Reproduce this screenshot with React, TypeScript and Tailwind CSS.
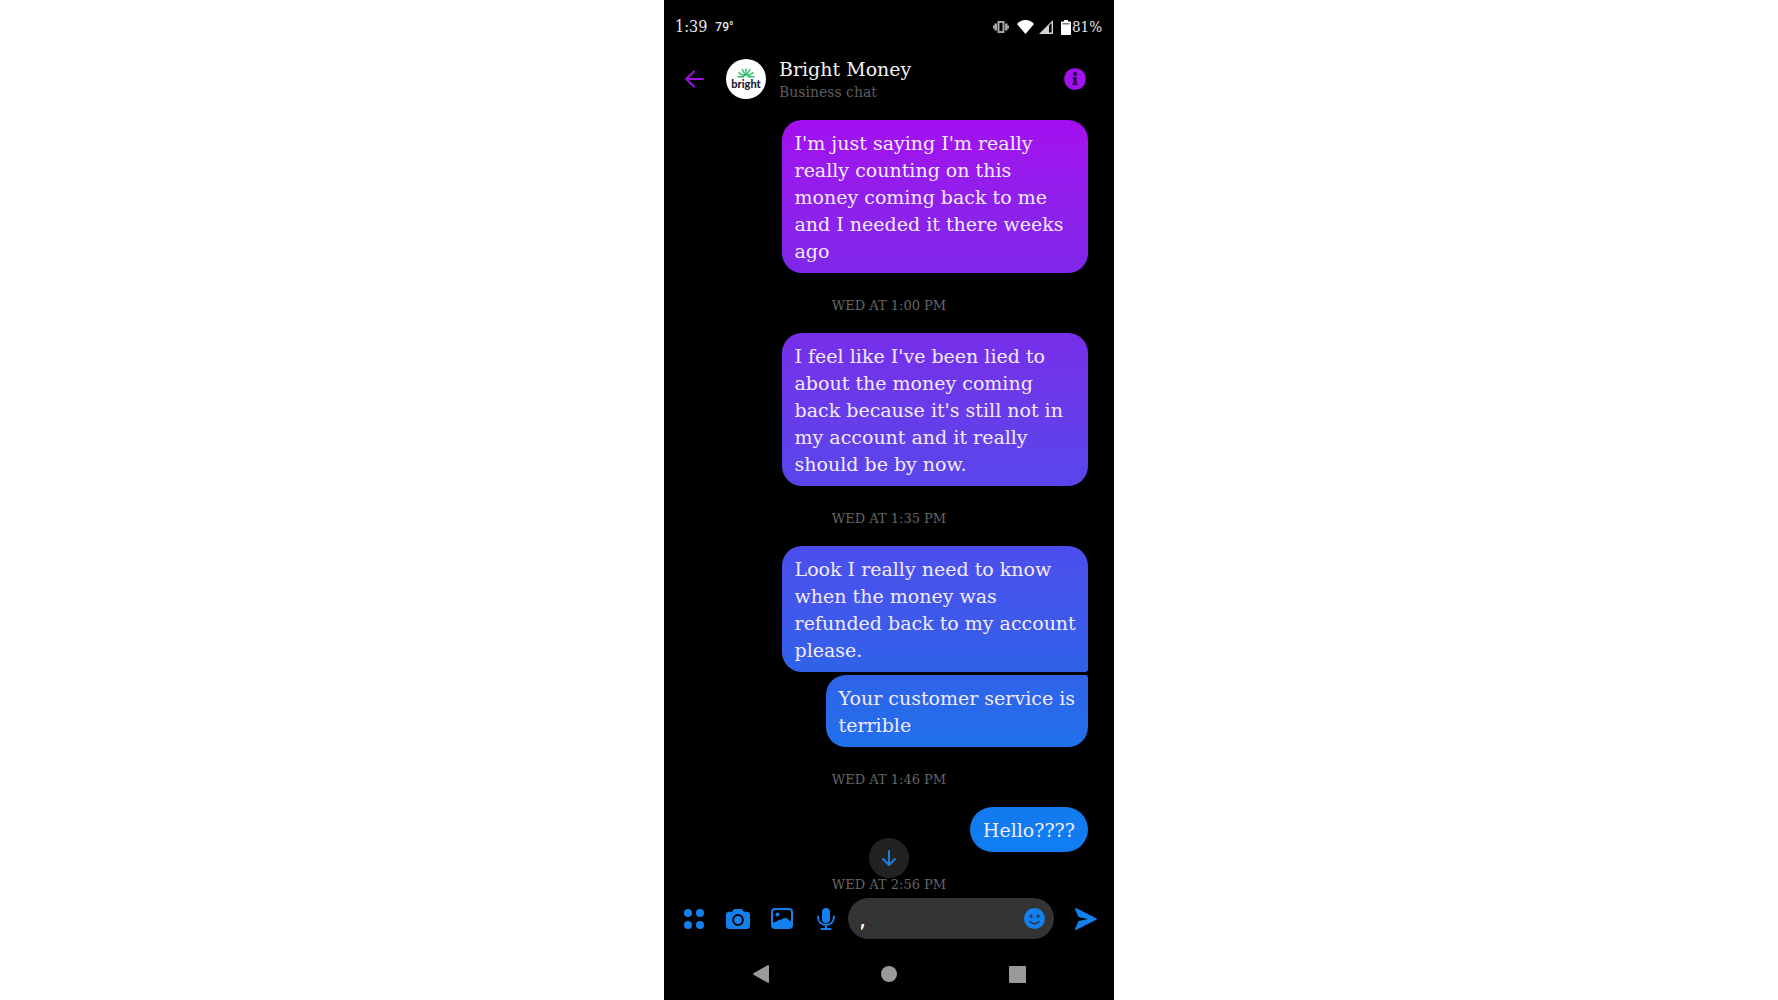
import React, { useState } from 'react';
import { clsx } from 'clsx';

// --- Data ---
type Message = {
  id: number;
  text: string;
  className: string;
  time?: string;
};

const MESSAGES: Message[] = [
  {
    id: 1,
    text: "I'm just saying I'm really\nreally counting on this\nmoney coming back to me\nand I needed it there weeks\nago",
    className: 'w-[77%] rounded-[20px] from-[#a30eef] to-[#7f27e8]',
    time: 'WED AT 1:00 PM',
  },
  {
    id: 2,
    text: "I feel like I've been lied to\nabout the money coming\nback because it's still not in\nmy account and it really\nshould be by now.",
    className: 'w-[77%] rounded-[20px] from-[#772ee9] to-[#5746ea]',
    time: 'WED AT 1:35 PM',
  },
  {
    id: 3,
    text: 'Look I really need to know\nwhen the money was\nrefunded back to my account\nplease.',
    className: 'mb-[3px] w-[77%] rounded-[20px] rounded-br-[3px] from-[#4c4dec] to-[#2f62e9]',
  },
  {
    id: 4,
    text: 'Your customer service is\nterrible',
    className: 'rounded-[20px] rounded-tr-[3px] from-[#2f63e9] to-[#1f70ec]',
    time: 'WED AT 1:46 PM',
  },
  {
    id: 5,
    text: 'Hello????',
    className: 'rounded-[23px] from-[#127bee] to-[#0f7df3]',
    time: 'WED AT 2:56 PM',
  },
];

// --- Status bar ---
function StatusBar() {
  return (
    <div className="flex h-[54px] shrink-0 items-center justify-between pr-3 pl-[11px] font-['DejaVu_Serif_Condensed','DejaVu_Serif',serif] text-[#e8e8e8]">
      <div className="flex items-center gap-2">
        <span className="text-base">1:39</span>
        <span className="font-['Roboto'] text-xs font-medium">79°</span>
      </div>
      <div className="flex items-center">
        <svg width="16" height="12" viewBox="0 0 16 12" className="mr-2 fill-[#a5a5a5]">
          <path d="M0 4.500h1.500V2.500H4v7H1.500v-2H0zM16 4.500h-1.500V2.500H12v7h2.500v-2H16z" />
          <path fillRule="evenodd" d="M4.500 0h7v12h-7zM6.500 2v8h3V2z" />
        </svg>
        <svg width="17" height="14" viewBox="0 0 17 14" className="mr-[5px] fill-white">
          <path d="M8.500 14 0 4C4.500-1.300 12.500-1.300 17 4z" />
        </svg>
        <svg width="14" height="14" viewBox="0 0 14 14" className="mr-2">
          <path d="M14 0v14H0z" fill="#d5d5d5" />
          <path d="M10 5.500 12.600 3v9.500H10z" fill="#000" />
        </svg>
        <svg width="10" height="15" viewBox="0 0 10 15" className="mr-px">
          <path d="M3 0h4v1.500h2c.600 0 1 .400 1 1V14c0 .600-.400 1-1 1H1c-.600 0-1-.400-1-1V2.500c0-.600.400-1 1-1h2z" fill="#fff" />
          <path d="M1.500 3h7v1.500h-7z" fill="#777" />
        </svg>
        <span className="text-[15px]">81%</span>
      </div>
    </div>
  );
}

function BrightLogo() {
  return (
    <div className="flex size-10 shrink-0 flex-col items-center rounded-full bg-white pt-[9px]">
      <svg width="18" height="10" viewBox="0 0 18 10" className="shrink-0" fill="none" stroke="#2fbd6b" strokeWidth="1.500" strokeLinecap="round">
        <path d="M1 8.800h5M12 8.800h5M2 4.800l5 3M16 4.800l-5 3M5.300 1.500l2.500 5M12.700 1.500l-2.500 5M9 .900v5.500" />
        <path d="M6 9c.500-3 5.500-3 6 0" />
      </svg>
      <span className="font-['Lato'] text-[11px] leading-3 font-black text-[#1d1b33]">bright</span>
    </div>
  );
}

// --- Header ---
function ChatHeader() {
  return (
    <header className="flex h-[50px] shrink-0 items-center pr-7 pl-[21px]">
      <button aria-label="Back" className="mr-[21px] shrink-0">
        <svg width="20" height="18" viewBox="0 0 20 18" fill="none" stroke="#9c14e0" strokeWidth="2" strokeLinecap="round" strokeLinejoin="round">
          <path d="M18 9H1.500M9 1.500 1.200 9 9 16.500" />
        </svg>
      </button>
      <BrightLogo />
      <div className="ml-[13px] flex-1 pt-0.5">
        <h1 className="text-[19px] leading-6 text-[#f2f2f2]">Bright Money</h1>
        <p className="text-sm leading-[22px] text-[#5c5c5c]">Business chat</p>
      </div>
      <button aria-label="Conversation info">
        <svg width="22" height="22" viewBox="0 0 22 22">
          <circle cx="11" cy="11" r="10.800" fill="#a012f0" />
          <circle cx="11" cy="6" r="2" fill="#250040" />
          <path d="M8.500 9.300h4v6.200h1V17h-5v-1.500h1v-4.700h-1z" fill="#250040" />
        </svg>
      </button>
    </header>
  );
}

function MessageItem({ message }: { message: Message }) {
  return (
    <li className="flex flex-col items-end">
      <p
        className={clsx(
          'bg-linear-to-b px-[13px] pt-2.5 pb-2 text-[19px] leading-[27px] whitespace-pre text-[#f4eaff]',
          message.className
        )}
      >
        {message.text}
      </p>
      {message.time && (
        <time className="flex h-[60px] w-full items-center justify-center pt-1.5 text-[13px] text-[#666]">{message.time}</time>
      )}
    </li>
  );
}

// --- Composer ---
function Composer() {
  const [draft, setDraft] = useState(',');

  return (
    <form className="flex h-[59px] shrink-0 items-center px-2 text-[#1380f0]" onSubmit={e => e.preventDefault()}>
      <button type="button" aria-label="More" className="flex w-11 shrink-0 justify-center">
        <svg width="20" height="20" viewBox="0 0 20 20" fill="currentColor">
          <circle cx="4" cy="4" r="4" />
          <circle cx="16" cy="4" r="4" />
          <circle cx="4" cy="16" r="4" />
          <circle cx="16" cy="16" r="4" />
        </svg>
      </button>
      <button type="button" aria-label="Camera" className="flex w-11 shrink-0 justify-center">
        <svg width="24" height="20" viewBox="0 0 24 20">
          <path d="M7 1.500C7.600.500 8.300 0 9.300 0h5.400c1 0 1.700.500 2.300 1.500l.8 1.300H21c1.700 0 3 1.300 3 3V17c0 1.700-1.300 3-3 3H3c-1.700 0-3-1.300-3-3V5.800c0-1.700 1.300-3 3-3h3.200z" fill="currentColor" />
          <circle cx="12" cy="11" r="4.900" fill="none" stroke="#000" strokeWidth="2" />
        </svg>
      </button>
      <button type="button" aria-label="Gallery" className="flex w-11 shrink-0 justify-center">
        <svg width="22" height="21" viewBox="0 0 22 21">
          <rect x="1" y="1" width="20" height="19" rx="3" fill="none" stroke="currentColor" strokeWidth="2" />
          <circle cx="6.500" cy="6.500" r="2" fill="currentColor" />
          <path d="M1 14.500c2.500 0 4-.700 5.500-1.800C8 11.500 9 12 10.300 11.500c1.500-.500 2.500-1.500 4.200-1.500 2.500 0 3.500 3 6.500 4v3c0 2-1 3-3 3H4c-2 0-3-1-3-3z" fill="currentColor" />
        </svg>
      </button>
      <button type="button" aria-label="Voice message" className="flex w-11 shrink-0 justify-center">
        <svg width="18" height="22" viewBox="0 0 18 22">
          <rect x="5" y="0" width="8" height="15" rx="4" fill="currentColor" />
          <path d="M1 8.500c0 5.500 3.500 8.500 8 8.500s8-3 8-8.500M9 17v4M4.500 21h9" fill="none" stroke="currentColor" strokeWidth="2" strokeLinecap="round" />
        </svg>
      </button>
      <div className="mr-3 flex h-[41px] min-w-0 flex-1 items-center rounded-full bg-[#343434] pr-[9px] pl-[13px]">
        <input
          aria-label="Message"
          value={draft}
          onChange={e => setDraft(e.target.value)}
          className="w-full min-w-0 bg-transparent font-['Roboto'] text-xl font-bold text-white italic outline-none"
        />
        <button type="button" aria-label="Emoji" className="shrink-0">
          <svg width="21" height="21" viewBox="0 0 21 21">
            <circle cx="10.500" cy="10.500" r="10.500" fill="currentColor" />
            <ellipse cx="7" cy="8.300" rx="1.500" ry="1.800" fill="#263c58" />
            <ellipse cx="14" cy="8.300" rx="1.500" ry="1.800" fill="#263c58" />
            <path d="M6 13.500c2.300 3 6.700 3 9 0" fill="none" stroke="#263c58" strokeWidth="1.800" strokeLinecap="round" />
          </svg>
        </button>
      </div>
      <button type="submit" aria-label="Send" className="flex w-10 shrink-0 justify-center">
        <svg width="22" height="22" viewBox="0 0 22 22" fill="currentColor">
          <path d="M1.500.200 21.200 10.200c.800.400.800 1.200 0 1.600L1.500 21.800C.500 22.200-.200 21.500.200 20.500L3.500 13 13 11 3.500 9 .200 1.500C-.200.500.500-.200 1.500.200z" />
        </svg>
      </button>
    </form>
  );
}

function NavBar() {
  return (
    <nav className="flex h-[52px] shrink-0 justify-center fill-[#9a9a9a]">
      <button aria-label="System back" className="flex w-32 items-center justify-center">
        <svg width="16" height="18" viewBox="0 0 16 18">
          <path d="M15 0c.600 0 1 .300 1 1v16c0 .700-.500 1.200-1.200.800L.600 9.700c-.700-.400-.700-1 0-1.400L14.500.200z" />
        </svg>
      </button>
      <button aria-label="Home" className="flex w-32 items-center justify-center">
        <svg width="16" height="16" viewBox="0 0 16 16">
          <circle cx="8" cy="8" r="8" />
        </svg>
      </button>
      <button aria-label="Recent apps" className="flex w-32 items-center justify-center">
        <svg width="17" height="17" viewBox="0 0 17 17">
          <rect width="17" height="17" rx="1" />
        </svg>
      </button>
    </nav>
  );
}

export default function App() {
  return (
    <div className="min-h-screen bg-white">
      <main className="mx-auto flex h-screen w-full max-w-[450px] flex-col bg-black font-['DejaVu_Serif',serif]">
        <StatusBar />
        <ChatHeader />
        <section className="relative min-h-0 flex-1 overflow-hidden">
          <ul className="px-[26px] pt-4">
            {MESSAGES.map(message => (
              <MessageItem key={message.id} message={message} />
            ))}
          </ul>
          <button
            aria-label="Scroll to latest"
            className="absolute bottom-[11px] left-1/2 flex size-10 -translate-x-1/2 items-center justify-center rounded-full bg-[#222]"
          >
            <svg width="14" height="16" viewBox="0 0 14 16" fill="none" stroke="#1f7fd8" strokeWidth="2" strokeLinecap="round" strokeLinejoin="round">
              <path d="M7 1v14M1 9l6 6 6-6" />
            </svg>
          </button>
        </section>
        <Composer />
        <NavBar />
      </main>
    </div>
  );
}
